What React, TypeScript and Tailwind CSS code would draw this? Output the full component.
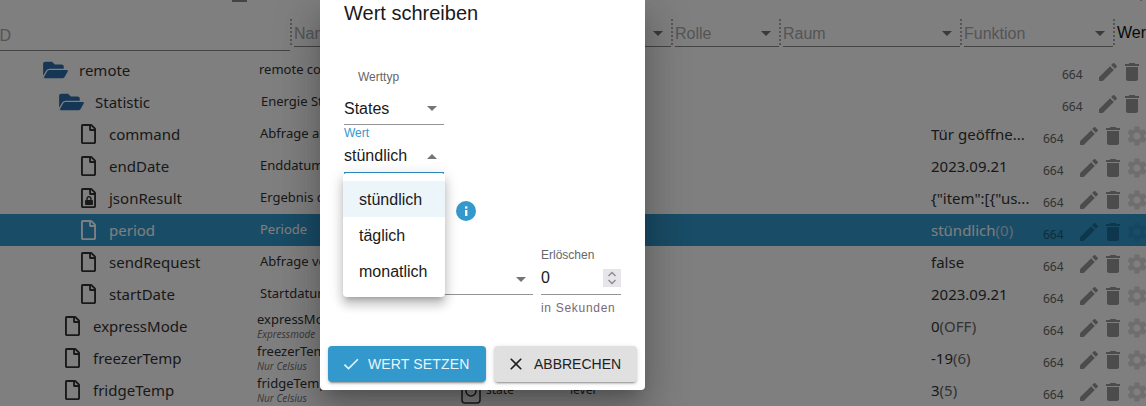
import React from "react";
import { FaFolderOpen, FaRegFile, FaLock } from "react-icons/fa";

const EDIT = "M3 17.25V21h3.75L17.81 9.94l-3.75-3.75L3 17.25zM20.71 7.04c.39-.39.39-1.02 0-1.41l-2.34-2.34a.9959.9959 0 0 0-1.41 0l-1.83 1.83 3.75 3.75 1.83-1.83z";
const TRASH = "M6 19c0 1.1.9 2 2 2h8c1.1 0 2-.9 2-2V7H6v12zM19 4h-3.5l-1-1h-5l-1 1H5v2h14V4z";
const GEAR = "M19.14 12.94c.04-.3.06-.61.06-.94 0-.32-.02-.64-.07-.94l2.03-1.58c.18-.14.23-.41.12-.61l-1.92-3.32c-.12-.22-.37-.29-.59-.22l-2.39.96c-.5-.38-1.03-.7-1.62-.94l-.36-2.54c-.04-.24-.24-.41-.48-.41h-3.84c-.24 0-.43.17-.47.41l-.36 2.54c-.59.24-1.13.57-1.62.94l-2.39-.96c-.22-.08-.47 0-.59.22L2.74 8.87c-.12.21-.08.47.12.61l2.03 1.58c-.05.3-.09.63-.09.94s.02.64.07.94l-2.03 1.58c-.18.14-.23.41-.12.61l1.92 3.32c.12.22.37.29.59.22l2.39-.96c.5.38 1.03.7 1.62.94l.36 2.54c.05.24.24.41.48.41h3.84c.24 0 .44-.17.47-.41l.36-2.54c.59-.24 1.13-.56 1.62-.94l2.39.96c.22.08.47 0 .59-.22l1.92-3.32c.12-.22.07-.47-.12-.61l-2.01-1.58zM12 15.6c-1.98 0-3.6-1.62-3.6-3.6s1.62-3.6 3.6-3.6 3.6 1.62 3.6 3.6-1.62 3.6-3.6 3.6z";

function Mi({ d, className }: { d: string; className: string }) {
  return (
    <svg viewBox="0 0 24 24" className={className} fill="currentColor">
      <path d={d} />
    </svg>
  );
}

function Arrow({ className = "" }: { className?: string }) {
  return <span className={"w-0 h-0 border-x-[5px] border-x-transparent border-t-[5px] border-t-[#757575] " + className} />;
}

type Row = {
  name: string;
  depth: number;
  kind: "folder" | "file" | "lock";
  desc?: string;
  descClass?: string;
  sub?: string;
  value?: string;
  paren?: string;
  selected?: boolean;
  last?: boolean;
};

const rows: Row[] = [
  { name: "remote", depth: 43, kind: "folder", desc: "remote control", descClass: "ml-[2px]" },
  { name: "Statistic", depth: 59, kind: "folder", desc: "Energie Statistik", descClass: "ml-[4px]" },
  { name: "command", depth: 81, kind: "file", desc: "Abfrage ausführen", descClass: "ml-[3px]", value: "Tür geöffne..." },
  { name: "endDate", depth: 81, kind: "file", desc: "Enddatum", descClass: "ml-[3px]", value: "2023.09.21" },
  { name: "jsonResult", depth: 81, kind: "lock", desc: "Ergebnis der Abfrage", descClass: "ml-[3px]", value: '{"item":[{"us...' },
  { name: "period", depth: 81, kind: "file", desc: "Periode", descClass: "ml-[3px]", value: "stündlich", paren: "(0)", selected: true },
  { name: "sendRequest", depth: 81, kind: "file", desc: "Abfrage versenden", descClass: "ml-[3px]", value: "false" },
  { name: "startDate", depth: 81, kind: "file", desc: "Startdatum", descClass: "ml-[3px]", value: "2023.09.21" },
  { name: "expressMode", depth: 65, kind: "file", desc: "expressMode", sub: "Expressmode", value: "0", paren: "(OFF)" },
  { name: "freezerTemp", depth: 65, kind: "file", desc: "freezerTemp", sub: "Nur Celsius", value: "-19", paren: "(6)" },
  { name: "fridgeTemp", depth: 65, kind: "file", desc: "fridgeTemp", sub: "Nur Celsius", value: "3", paren: "(5)", last: true },
];

function TreeRow({ r }: { r: Row }) {
  const textColor = r.selected ? "text-white" : "text-[#333]";
  const actionColor = r.selected ? "text-[#1d6c9a]" : "text-[#989898]";
  return (
    <div className={"flex items-center h-8 flex-none " + (r.selected ? "bg-[#3399cc] " : "") + textColor} style={{ paddingLeft: r.depth }}>
      <div className="flex items-center flex-none" style={{ width: 257 - r.depth }}>
        {r.kind === "folder" ? (
          <FaFolderOpen className="w-[25px] h-[22px] text-[#2a6ca8] flex-none mr-[11px]" />
        ) : (
          <span className="relative flex-none mr-[13px] w-[15px] h-5">
            <FaRegFile className="w-[15px] h-5" />
            {r.kind === "lock" && <FaLock className="absolute left-[3.5px] top-[8px] w-2 h-[9px]" />}
          </span>
        )}
        <span className="text-[15px]">{r.name}</span>
      </div>
      <div className={"w-[674px] flex-none " + (r.last ? "flex items-center " : "")}>
        {r.sub ? (
          <div className="w-[204px] flex-none flex flex-col -mt-px">
            <span className="text-[13px] leading-[18px]">{r.desc}</span>
            <span className="text-[10px] leading-[13px] italic text-[#777]">{r.sub}</span>
          </div>
        ) : (
          <span className={"text-[13px] block " + r.descClass}>{r.desc}</span>
        )}
        {r.last && (
          <>
            <svg viewBox="0 0 20 22" className="w-5 h-[22px] flex-none text-[#333] mt-1.5" fill="none" stroke="currentColor" strokeWidth="1.5">
              <rect x="1" y="1" width="18" height="20" rx="3" />
              <circle cx="10" cy="9" r="5" />
            </svg>
            <span className="text-[12px] ml-[5px] w-[84px] flex-none">state</span>
            <span className="text-[12px]">level</span>
          </>
        )}
      </div>
      <div className={"flex-none truncate text-[15px] " + (r.value ? "w-[112px]" : "w-[131px]")}>
        {r.value}
        {r.paren && <span className={r.selected ? "text-[#c0d8e4]" : "text-[#666]"}>{r.paren}</span>}
      </div>
      <span className={"w-[34px] flex-none text-[12px] mt-[9px] " + (r.selected ? "text-[#1d5a7a]" : "text-[#666]")}>664</span>
      <Mi d={EDIT} className={"w-6 h-6 flex-none mt-1 " + actionColor} />
      <Mi d={TRASH} className={"w-6 h-6 flex-none mt-1 " + actionColor} />
      {r.value && <Mi d={GEAR} className={"w-6 h-6 flex-none mt-1 " + (r.selected ? "text-[#2e8fc0]" : "text-[#dcdcdc]")} />}
    </div>
  );
}

function HeaderCell({ label, w, arrow }: { label: string; w: string; arrow?: boolean }) {
  return (
    <div className={"flex-none flex items-center justify-between h-[28px] pt-[2px] border-b border-[#888] ml-[2px] pr-2 text-[16px] text-[#aaa] " + w}>
      <span>{label}</span>
      {arrow && <Arrow />}
    </div>
  );
}

function Sep() {
  return <div className="flex-none w-0 h-[26px] border-l-2 border-dotted border-[#aaa] self-start" />;
}

export default function App() {
  return (
    <div className="relative w-[1146px] h-[406px] overflow-hidden bg-white font-['Liberation_Sans',Arial,sans-serif]">
      <div className="flex flex-col h-full">
        <div className="flex h-[2px] flex-none overflow-hidden">
          <span className="ml-[232px] w-4 h-[2px] bg-[#888]" />
          <span className="ml-[889px] -mt-[2px]"><Arrow /></span>
        </div>
        <div className="flex h-[52px] flex-none pt-[17px] items-start">
          <div className="w-[290px] flex-none h-[32px] border-b border-[#888] text-[16px] text-[#aaa] flex items-center overflow-hidden pt-[2px]">
            <span className="-ml-[5px]">ID</span>
          </div>
          <Sep />
          <HeaderCell label="Name" w="w-[377px]" arrow />
          <Sep />
          <HeaderCell label="Rolle" w="w-[104px]" arrow />
          <Sep />
          <HeaderCell label="Raum" w="w-[177px]" arrow />
          <Sep />
          <HeaderCell label="Funktion" w="w-[149px]" arrow />
          <Sep />
          <span className="ml-[2px] text-[16px] text-[#111] h-[28px] flex items-center">Wert</span>
        </div>
        <div className="flex flex-col font-['Noto_Sans',sans-serif]">
          {rows.map((r) => (
            <TreeRow key={r.name} r={r} />
          ))}
        </div>
      </div>

      <div className="absolute inset-0 bg-black/50" />

      <div className="absolute left-[320px] top-0 w-[325px] h-[390px] bg-white rounded-b flex flex-col text-[#1a1a1a] shadow-[0_11px_15px_-7px_rgba(0,0,0,0.2),0_24px_38px_3px_rgba(0,0,0,0.14),0_9px_46px_8px_rgba(0,0,0,0.12)]">
        <div className="pl-6 flex-1 flex flex-col">
          <h2 className="text-[20px] leading-[26px] h-[26px]">Wert schreiben</h2>
          <div className="mt-[44px] h-[14px] pl-[14px] text-[12px] leading-[14px] text-[#666]">Werttyp</div>
          <div className="w-[100px] h-[41px] border-b border-[#949494] flex items-center justify-between pt-[9px] pr-[7px] text-[16px]">
            <span>States</span>
            <Arrow />
          </div>
          <div className="h-[14px] mt-px text-[12px] leading-[14px] text-[#3399cc]">Wert</div>
          <div className="w-[100px] h-[34px] border-b-2 border-[#2d8fc4] flex items-center justify-between pr-[7px] text-[16px]">
            <span>stündlich</span>
            <Arrow className="rotate-180" />
          </div>
          <div className="mt-[27px] ml-[112px] w-5 h-5 rounded-full bg-[#3399cc] flex items-center justify-center text-white">
            <svg viewBox="0 0 20 20" className="w-5 h-5" fill="currentColor">
              <rect x="9" y="9" width="2.4" height="6" />
              <rect x="9" y="5.4" width="2.4" height="2.2" />
            </svg>
          </div>
          <div className="flex gap-2 mt-[27px]">
            <div className="w-[189px] h-[47px] border-b border-[#949494] flex items-center justify-end pr-[7px] pt-[17px]">
              <Arrow />
            </div>
            <div className="w-20 flex flex-col">
              <span className="text-[12px] leading-[14px] text-[#666]">Erlöschen</span>
              <div className="h-[33px] border-b border-[#949494] flex items-center justify-between text-[16px]">
                <span>0</span>
                <div className="w-[18px] h-[18px] bg-[#e7e5ea] flex flex-col items-center justify-center text-[#8a8a8a]">
                  <svg viewBox="0 0 10 14" className="w-[10px] h-[14px]" fill="none" stroke="currentColor" strokeWidth="1.3">
                    <path d="M1.5 5 5 1.5 8.5 5M1.5 9 5 12.5 8.5 9" />
                  </svg>
                </div>
              </div>
              <span className="mt-[6px] text-[12px] leading-[14px] tracking-[0.7px] text-[#7a6a72]">in Sekunden</span>
            </div>
          </div>
        </div>
        <div className="flex gap-2 px-2 pb-2">
          <button className="h-9 w-[158px] rounded bg-[#3399cc] text-[#e8f4fa] flex items-center pl-[13px] gap-[7px] text-[14px] tracking-[0.15px] shadow-[0_3px_1px_-2px_rgba(0,0,0,0.2),0_2px_2px_0_rgba(0,0,0,0.14),0_1px_5px_0_rgba(0,0,0,0.12)]">
            <svg viewBox="0 0 24 24" className="w-5 h-5" fill="currentColor">
              <path d="M9 16.17 4.83 12l-1.42 1.41L9 19 21 7l-1.41-1.41z" />
            </svg>
            WERT SETZEN
          </button>
          <button className="h-9 w-[143px] rounded bg-[#e0e0e0] text-[#222] flex items-center pl-3 gap-2 text-[14px] shadow-[0_3px_1px_-2px_rgba(0,0,0,0.2),0_2px_2px_0_rgba(0,0,0,0.14),0_1px_5px_0_rgba(0,0,0,0.12)]">
            <svg viewBox="0 0 24 24" className="w-5 h-5" fill="currentColor">
              <path d="M19 6.41 17.59 5 12 10.59 6.41 5 5 6.41 10.59 12 5 17.59 6.41 19 12 13.41 17.59 19 19 17.59 13.41 12z" />
            </svg>
            ABBRECHEN
          </button>
        </div>

        <div className="absolute left-[23px] top-[173px] w-[102px] h-[124px] py-2 bg-white rounded flex flex-col text-[16px] shadow-[0_5px_5px_-3px_rgba(0,0,0,0.2),0_8px_10px_1px_rgba(0,0,0,0.14),0_3px_14px_2px_rgba(0,0,0,0.12)]">
          <div className="h-9 pl-4 pt-[2px] flex items-center bg-[#ebf5fa]">stündlich</div>
          <div className="h-9 pl-4 pt-[2px] flex items-center">täglich</div>
          <div className="h-9 pl-4 pt-[2px] flex items-center">monatlich</div>
        </div>
      </div>
    </div>
  );
}
